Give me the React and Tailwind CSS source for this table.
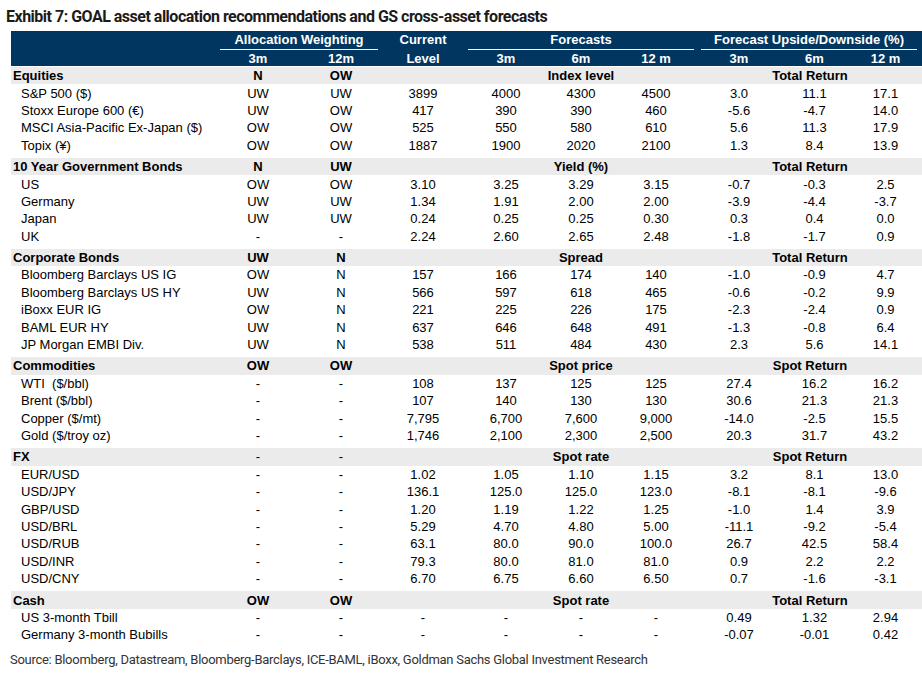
import React from 'react'

const cols = 'grid grid-cols-[205px_84px_82px_82px_84px_66px_84px_82px_69px_73px]'

const sections = [
  {
    name: 'Equities', a3: 'N', a12: 'OW', fLabel: 'Index level', uLabel: 'Total Return',
    rows: [
      ['S&P 500 ($)', 'UW', 'UW', '3899', '4000', '4300', '4500', '3.0', '11.1', '17.1'],
      ['Stoxx Europe 600 (€)', 'UW', 'OW', '417', '390', '390', '460', '-5.6', '-4.7', '14.0'],
      ['MSCI Asia-Pacific Ex-Japan ($)', 'OW', 'OW', '525', '550', '580', '610', '5.6', '11.3', '17.9'],
      ['Topix (¥)', 'OW', 'OW', '1887', '1900', '2020', '2100', '1.3', '8.4', '13.9'],
    ],
  },
  {
    name: '10 Year Government Bonds', a3: 'N', a12: 'UW', fLabel: 'Yield (%)', uLabel: 'Total Return',
    rows: [
      ['US', 'OW', 'OW', '3.10', '3.25', '3.29', '3.15', '-0.7', '-0.3', '2.5'],
      ['Germany', 'UW', 'UW', '1.34', '1.91', '2.00', '2.00', '-3.9', '-4.4', '-3.7'],
      ['Japan', 'UW', 'UW', '0.24', '0.25', '0.25', '0.30', '0.3', '0.4', '0.0'],
      ['UK', '-', '-', '2.24', '2.60', '2.65', '2.48', '-1.8', '-1.7', '0.9'],
    ],
  },
  {
    name: 'Corporate Bonds', a3: 'UW', a12: 'N', fLabel: 'Spread', uLabel: 'Total Return',
    rows: [
      ['Bloomberg Barclays US IG', 'OW', 'N', '157', '166', '174', '140', '-1.0', '-0.9', '4.7'],
      ['Bloomberg Barclays US HY', 'UW', 'N', '566', '597', '618', '465', '-0.6', '-0.2', '9.9'],
      ['iBoxx EUR IG', 'OW', 'N', '221', '225', '226', '175', '-2.3', '-2.4', '0.9'],
      ['BAML EUR HY', 'UW', 'N', '637', '646', '648', '491', '-1.3', '-0.8', '6.4'],
      ['JP Morgan EMBI Div.', 'UW', 'N', '538', '511', '484', '430', '2.3', '5.6', '14.1'],
    ],
  },
  {
    name: 'Commodities', a3: 'OW', a12: 'OW', fLabel: 'Spot price', uLabel: 'Spot Return',
    rows: [
      ['WTI  ($/bbl)', '-', '-', '108', '137', '125', '125', '27.4', '16.2', '16.2'],
      ['Brent ($/bbl)', '-', '-', '107', '140', '130', '130', '30.6', '21.3', '21.3'],
      ['Copper ($/mt)', '-', '-', '7,795', '6,700', '7,600', '9,000', '-14.0', '-2.5', '15.5'],
      ['Gold ($/troy oz)', '-', '-', '1,746', '2,100', '2,300', '2,500', '20.3', '31.7', '43.2'],
    ],
  },
  {
    name: 'FX', a3: '-', a12: '-', fLabel: 'Spot rate', uLabel: 'Spot Return',
    rows: [
      ['EUR/USD', '-', '-', '1.02', '1.05', '1.10', '1.15', '3.2', '8.1', '13.0'],
      ['USD/JPY', '-', '-', '136.1', '125.0', '125.0', '123.0', '-8.1', '-8.1', '-9.6'],
      ['GBP/USD', '-', '-', '1.20', '1.19', '1.22', '1.25', '-1.0', '1.4', '3.9'],
      ['USD/BRL', '-', '-', '5.29', '4.70', '4.80', '5.00', '-11.1', '-9.2', '-5.4'],
      ['USD/RUB', '-', '-', '63.1', '80.0', '90.0', '100.0', '26.7', '42.5', '58.4'],
      ['USD/INR', '-', '-', '79.3', '80.0', '81.0', '81.0', '0.9', '2.2', '2.2'],
      ['USD/CNY', '-', '-', '6.70', '6.75', '6.60', '6.50', '0.7', '-1.6', '-3.1'],
    ],
  },
  {
    name: 'Cash', a3: 'OW', a12: 'OW', fLabel: 'Spot rate', uLabel: 'Total Return',
    rows: [
      ['US 3-month Tbill', '-', '-', '-', '-', '-', '-', '0.49', '1.32', '2.94'],
      ['Germany 3-month Bubills', '-', '-', '-', '-', '-', '-', '-0.07', '-0.01', '0.42'],
    ],
  },
]

function Section({ s, first }) {
  return (
    <div className={first ? 'mt-px' : 'mt-[4px]'}>
      <div className={`${cols} h-[17.4px] items-center bg-[#ebebeb] font-bold`}>
        <div className="pl-[2px]">{s.name}</div>
        <div className={`text-center ${s.a3 === '-' ? 'font-normal' : ''}`}>{s.a3}</div>
        <div className={`text-center ${s.a12 === '-' ? 'font-normal' : ''}`}>{s.a12}</div>
        <div></div>
        <div className="col-span-3 text-center">{s.fLabel}</div>
        <div className="col-span-3 text-center">{s.uLabel}</div>
      </div>
      {s.rows.map((r) => (
        <div key={r[0]} className={`${cols} h-[17.4px] items-center`}>
          <div className="pl-[10px] whitespace-pre">{r[0]}</div>
          {r.slice(1).map((v, i) => (
            <div key={i} className="text-center">{v}</div>
          ))}
        </div>
      ))}
    </div>
  )
}

export default function App() {
  return (
    <div className="w-[922px] h-[684px] bg-white text-black">
      <div className="h-[31px] flex items-center pl-[6px] pt-[2px] font-['Roboto',sans-serif] font-bold text-[16px] tracking-[-0.5px] text-[#1b1b1b]">
        Exhibit 7: GOAL asset allocation recommendations and GS cross-asset forecasts
      </div>
      <div className="ml-[11px] font-['Liberation_Sans',Arial,sans-serif] text-[13px] leading-none">
        <div className={`${cols} bg-[#013660] text-white font-bold`}>
          <div className="row-span-2"></div>
          <div className="col-span-2 h-[19px] flex flex-col justify-end">
            <div className="mx-[4px] border-b border-white pb-[3px] text-center">Allocation Weighting</div>
          </div>
          <div className="row-span-2 flex flex-col items-center justify-center gap-[6px] pt-[1px]">
            <div>Current</div>
            <div>Level</div>
          </div>
          <div className="col-span-3 h-[19px] flex flex-col justify-end">
            <div className="mx-[4px] border-b border-white pb-[3px] text-center">Forecasts</div>
          </div>
          <div className="col-span-3 h-[19px] flex flex-col justify-end">
            <div className="ml-[3px] mr-[5px] border-b border-white pb-[3px] text-center">Forecast Upside/Downside (%)</div>
          </div>
          <div className="h-[16px] flex items-center justify-center">3m</div>
          <div className="h-[16px] flex items-center justify-center">12m</div>
          <div className="h-[16px] flex items-center justify-center">3m</div>
          <div className="h-[16px] flex items-center justify-center">6m</div>
          <div className="h-[16px] flex items-center justify-center">12 m</div>
          <div className="h-[16px] flex items-center justify-center">3m</div>
          <div className="h-[16px] flex items-center justify-center">6m</div>
          <div className="h-[16px] flex items-center justify-center">12 m</div>
        </div>
        {sections.map((s, i) => (
          <Section key={s.name} s={s} first={i === 0} />
        ))}
      </div>
      <div className="mt-[8px] pl-[10px] font-['Roboto',sans-serif] text-[13px] tracking-[-0.28px] leading-[16px] text-[#333]">
        Source: Bloomberg, Datastream, Bloomberg-Barclays, ICE-BAML, iBoxx, Goldman Sachs Global Investment Research
      </div>
    </div>
  )
}
